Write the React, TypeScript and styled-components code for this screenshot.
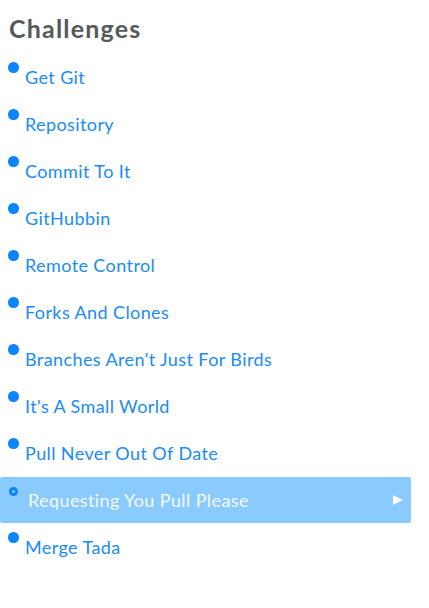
import React, { FC } from "react";
import styled, { createGlobalStyle } from "styled-components";

const challenges = [
  "Get Git",
  "Repository",
  "Commit To It",
  "GitHubbin",
  "Remote Control",
  "Forks And Clones",
  "Branches Aren't Just For Birds",
  "It's A Small World",
  "Pull Never Out Of Date",
  "Requesting You Pull Please",
  "Merge Tada",
];

const current = "Requesting You Pull Please";

const GlobalStyle = createGlobalStyle`
  body {
    margin: 0;
    background: #fff;
    font-family: "Lato", "Liberation Sans", sans-serif;
  }
`;

const App: FC = () => {
  return (
    <>
      <GlobalStyle />
      <Sidebar>
        <Title>Challenges</Title>
        <List>
          {challenges.map((name) => {
            const active = name === current;
            return (
              <Item key={name} $active={active}>
                <Dot $active={active} />
                <Label $active={active}>{name}</Label>
                {active && <Arrow />}
              </Item>
            );
          })}
        </List>
      </Sidebar>
    </>
  );
};

const Sidebar = styled.nav`
  width: 411px;
  padding-top: 13px;
`;

const Title = styled.h1`
  margin: 0 0 10px 9px;
  font-size: 25px;
  line-height: 31px;
  font-weight: 700;
  letter-spacing: 1.2px;
  color: #555a5a;
`;

const List = styled.ul`
  list-style: none;
  margin: 0;
  padding: 0;
`;

const Item = styled.li<{ $active: boolean }>`
  position: relative;
  display: flex;
  align-items: center;
  height: 46px;
  margin-bottom: 1px;
  padding-left: ${(p) => (p.$active ? "28px" : "25px")};
  padding-right: 8px;
  border-radius: 2px;
  background: ${(p) => (p.$active ? "#89caff" : "transparent")};
`;

const Dot = styled.span<{ $active: boolean }>`
  position: absolute;
  left: ${(p) => (p.$active ? "8.5px" : "8px")};
  top: ${(p) => (p.$active ? "9.5px" : "8px")};
  box-sizing: border-box;
  width: ${(p) => (p.$active ? "9px" : "10.5px")};
  height: ${(p) => (p.$active ? "9px" : "10.5px")};
  border-radius: 50%;
  background: ${(p) => (p.$active ? "#89caff" : "#0a84ff")};
  border: ${(p) => (p.$active ? "3px solid #0a84ff" : "none")};
`;

const Label = styled.span<{ $active: boolean }>`
  flex: 1;
  font-size: 18px;
  letter-spacing: 0.4px;
  color: ${(p) => (p.$active ? "#f4faff" : "#1a8bf7")};
`;

const Arrow = styled.span`
  width: 0;
  height: 0;
  border-left: 10px solid #fff;
  border-top: 5.5px solid transparent;
  border-bottom: 5.5px solid transparent;
`;

export default App;
